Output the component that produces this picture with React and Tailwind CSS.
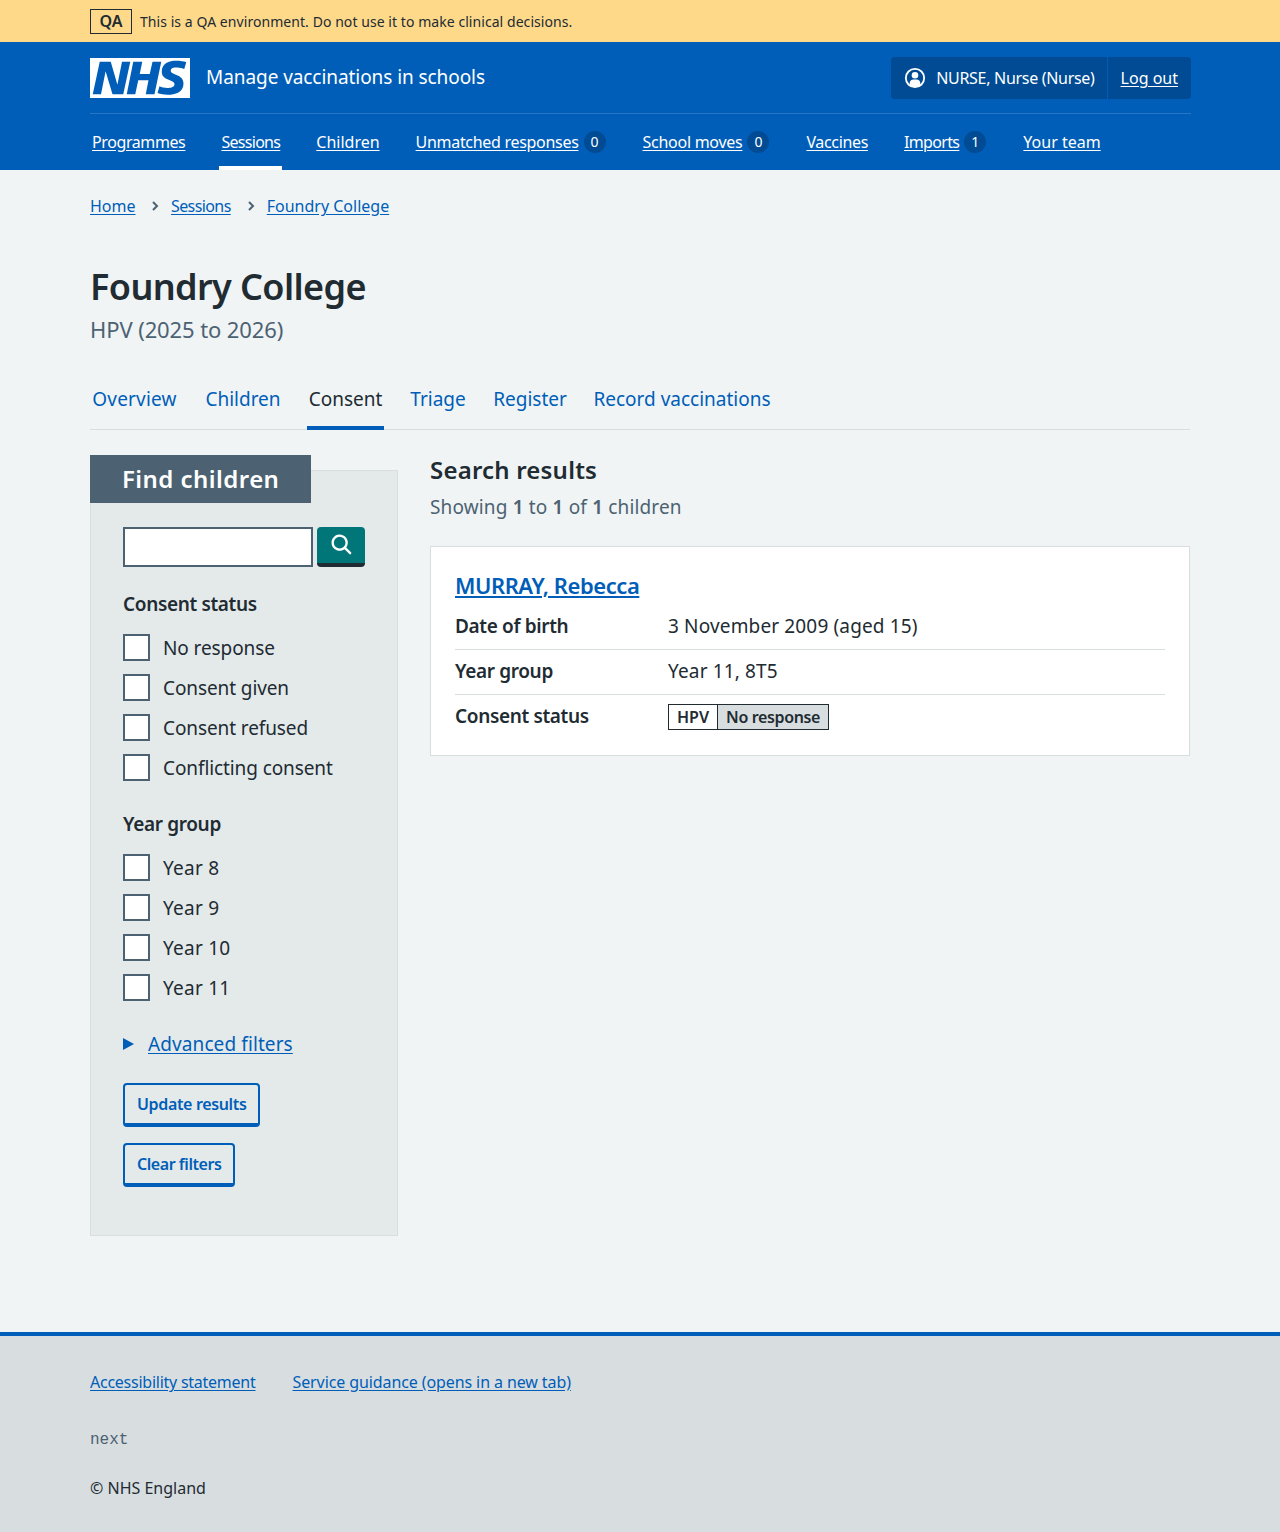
const navItems = [
  { label: 'Programmes', tracking: 'tracking-[-0.4px]' },
  { label: 'Sessions', tracking: 'tracking-[-0.7px]', active: true },
  { label: 'Children', tracking: 'tracking-normal' },
  { label: 'Unmatched responses', tracking: 'tracking-[-0.3px]', count: 0 },
  { label: 'School moves', tracking: 'tracking-[-0.27px]', count: 0 },
  { label: 'Vaccines', tracking: 'tracking-[-0.35px]' },
  { label: 'Imports', tracking: 'tracking-[-0.65px]', count: 1 },
  { label: 'Your team', tracking: 'tracking-normal' },
]

const tabs = [
  { label: 'Overview', width: 'w-[89px] tracking-[0.2px]' },
  { label: 'Children', width: 'w-[80px]' },
  { label: 'Consent', width: 'w-[77px]', active: true },
  { label: 'Triage', width: 'w-[60px]' },
  { label: 'Register', width: 'w-[76px]' },
  { label: 'Record vaccinations', width: 'w-[180px]' },
]

function NhsLogo() {
  return (
    <svg viewBox="0 0 40 16" className="w-[100px] h-10 shrink-0" role="img" aria-label="NHS">
      <path fill="#fff" d="M0 0h40v16H0z" />
      <path
        fill="#005eb8"
        d="M3.9 1.5h4.4l2.6 9h.1l1.8-9h3.3l-2.8 13H9l-2.7-9h-.1l-1.8 9H1.1M17.3 1.5h3.6l-1 4.9h4L25 1.5h3.5l-2.7 13h-3.5l1.1-5.6h-4.1l-1.2 5.6h-3.4M37.7 4.4c-.7-.3-1.6-.6-2.9-.6-1.4 0-2.5.2-2.5 1.3 0 1.8 5.1 1.2 5.1 5.1 0 3.6-3.3 4.5-6.4 4.5-1.3 0-2.9-.3-4-.7l.8-2.7c.7.4 2.1.7 3.2.7s2.8-.2 2.8-1.5c0-2.1-5.1-1.3-5.1-5 0-3.4 2.9-4.4 5.8-4.4 1.6 0 3.1.2 4 .6"
      />
    </svg>
  )
}

function UserIcon() {
  return (
    <svg viewBox="0 0 24 24" className="w-[22px] h-[22px] shrink-0" fill="none">
      <circle cx="12" cy="12" r="10" stroke="#fff" strokeWidth="2" />
      <circle cx="12" cy="9" r="3.6" fill="#fff" />
      <path fill="#fff" d="M6.2 20v-2.4c0-2.4 1.8-4 4-4h3.6c2.2 0 4 1.6 4 4V20c-1.6 1.2-3.6 2-5.8 2s-4.2-.8-5.8-2z" />
    </svg>
  )
}

function SearchIcon() {
  return (
    <svg viewBox="0 0 24 24" className="w-7 h-7 ml-[2px]" fill="#fff">
      <path d="M19.71 18.29l-4.11-4.1a7 7 0 1 0-1.41 1.41l4.1 4.11a1 1 0 0 0 1.42 0 1 1 0 0 0 0-1.42zM5 10a5 5 0 1 1 5 5 5 5 0 0 1-5-5z" />
    </svg>
  )
}

function Chevron() {
  return (
    <svg viewBox="0 0 8 12" className="w-2 h-3 ml-4 mr-3 shrink-0" fill="none" stroke="#4c6272" strokeWidth="2">
      <path d="M2 2l4 4-4 4" />
    </svg>
  )
}

function Checkbox({ label, tracking }) {
  return (
    <label className={`flex items-center h-[28px] gap-[13px] text-[19px] leading-7 text-[#212b32] ${tracking}`}>
      <span className="w-[27px] h-[27px] bg-white border-2 border-[#4c6272] shrink-0" />
      <span className="pt-[2px]">{label}</span>
    </label>
  )
}

function FilterGroup({ title, options, tracking }) {
  return (
    <div>
      <p className="text-[19px] leading-7 font-semibold tracking-[-0.35px] text-[#212b32] mb-[15px]">{title}</p>
      <div className="flex flex-col gap-3">
        {options.map(option => (
          <Checkbox key={option} label={option} tracking={tracking} />
        ))}
      </div>
    </div>
  )
}

function Row({ label, last, children }) {
  return (
    <div className={`flex h-[45px] items-center pb-[2px] ${last ? '' : 'border-b border-[#d8dde0]'}`}>
      <span className="w-[213px] text-[19px] font-semibold tracking-[-0.35px] text-[#212b32]">{label}</span>
      <span className="text-[19px] tracking-[0.15px] text-[#212b32]">{children}</span>
    </div>
  )
}

function App() {
  return (
    <div className="min-h-[1532px] bg-[#f0f4f5] text-[#212b32] font-['Noto_Sans',sans-serif] flex flex-col">
      <div className="h-[42px] bg-[#ffd98a] px-[90px] flex items-center gap-2">
        <span className="w-[42px] h-[25px] border border-[#212b32] flex items-center justify-center text-[16px] font-semibold">
          QA
        </span>
        <span className="text-[14px] tracking-[0.06px]">This is a QA environment. Do not use it to make clinical decisions.</span>
      </div>

      <header className="bg-[#005eb8] h-[128px] px-[90px] text-white">
        <div className="h-[72px] border-b border-[#2a76c2] flex items-center justify-between -mr-px">
          <div className="flex items-center gap-4">
            <NhsLogo />
            <span className="text-[19px] tracking-[-0.07px] -mt-px">Manage vaccinations in schools</span>
          </div>
          <div className="h-[42px] bg-[#004b93] rounded flex items-center text-[16px]">
            <div className="h-full flex items-center gap-[10px] pl-[13px] pr-3 border-r border-[#005eb8]">
              <UserIcon />
              <span className="tracking-[-0.3px]">NURSE, Nurse (Nurse)</span>
            </div>
            <a className="px-[13px] underline underline-offset-2">Log out</a>
          </div>
        </div>
        <nav className="flex h-[56px] text-[16px]">
          {navItems.map(item => (
            <div
              key={item.label}
              className={`flex items-center gap-[5px] px-[2px] pt-[3px] border-b-4 ${item.count !== undefined ? 'mr-[33px]' : 'mr-[32px]'} ${item.active ? 'border-white' : 'border-transparent'}`}
            >
              <a className={`underline underline-offset-2 ${item.tracking}`}>{item.label}</a>
              {item.count !== undefined && (
                <span className="w-[22px] h-[22px] rounded-full bg-[#004b93] flex items-center justify-center text-[14px]">
                  {item.count}
                </span>
              )}
            </div>
          ))}
        </nav>
      </header>

      <main className="flex-1 px-[90px]">
        <div className="flex items-center h-[72px] text-[16px] text-[#005eb8]">
          <a className="underline underline-offset-2 w-[45px]">Home</a>
          <Chevron />
          <a className="underline underline-offset-2 tracking-[-0.6px]">Sessions</a>
          <Chevron />
          <a className="underline underline-offset-2">Foundry College</a>
        </div>

        <h1 className="mt-[24px] text-[36px] leading-[42px] font-semibold tracking-[-0.6px]">Foundry College</h1>
        <p className="mt-[6px] text-[22px] leading-[30px] tracking-[-0.1px] text-[#4c6272]">HPV (2025 to 2026)</p>

        <div className="mt-[32px] h-[54px] flex gap-6 border-b border-[#d8dde0] text-[19px]">
          {tabs.map(tab => (
            <a
              key={tab.label}
              className={`${tab.width} h-[54px] flex items-center justify-center pb-[4px] border-b-4 ${tab.active ? 'border-[#005eb8] text-[#212b32]' : 'border-transparent text-[#005eb8]'}`}
            >
              {tab.label}
            </a>
          ))}
        </div>

        <div className="mt-[40px] flex gap-8 items-start">
          <aside className="w-[308px] h-[766px] shrink-0 bg-[#e4e9ea] border border-[#d8dde0] pl-8 pr-8">
            <h2 className="-mt-4 -ml-[33px] w-[221px] h-[48px] bg-[#4c6272] text-white text-[24px] font-semibold tracking-[0.45px] flex items-center pl-8">
              Find children
            </h2>
            <div className="mt-6 flex gap-1">
              <input className="w-[190px] h-10 bg-white border-2 border-[#4c6272]" />
              <button className="w-12 h-10 bg-[#007679] rounded border-b-4 border-[#212b32] flex items-center justify-center">
                <SearchIcon />
              </button>
            </div>
            <div className="mt-[23px] flex flex-col gap-[29px]">
              <FilterGroup
                title="Consent status"
                tracking="tracking-[-0.1px]"
                options={['No response', 'Consent given', 'Consent refused', 'Conflicting consent']}
              />
              <FilterGroup
                title="Year group"
                tracking="tracking-[0.25px]"
                options={['Year 8', 'Year 9', 'Year 10', 'Year 11']}
              />
            </div>
            <div className="mt-[29px] flex items-center gap-[14px] text-[19px] text-[#005eb8]">
              <svg viewBox="0 0 11 12" className="w-[11px] h-3" fill="#005eb8">
                <path d="M0 0l11 6-11 6z" />
              </svg>
              <a className="underline underline-offset-2 tracking-[0.1px]">Advanced filters</a>
            </div>
            <div className="mt-[24px] flex flex-col items-start gap-4">
              <button className="h-11 px-3 pt-[1px] border-2 border-b-4 border-[#005eb8] rounded text-[#005eb8] text-[16px] font-semibold tracking-[-0.35px]">
                Update results
              </button>
              <button className="h-11 px-3 pt-[1px] border-2 border-b-4 border-[#005eb8] rounded text-[#005eb8] text-[16px] font-semibold tracking-[-0.45px]">
                Clear filters
              </button>
            </div>
          </aside>

          <section className="flex-1 min-w-0 -mt-4">
            <h2 className="text-[24px] leading-8 font-semibold tracking-[0.2px]">Search results</h2>
            <p className="mt-[7px] text-[19px] leading-7 tracking-[0.15px] text-[#4c6272]">
              Showing <b className="font-semibold">1</b> to <b className="font-semibold">1</b> of{' '}
              <b className="font-semibold">1</b> children
            </p>
            <div className="mt-[25px] h-[210px] bg-white border border-[#d8dde0] px-6 pt-[23px]">
              <a className="block mb-[5px] text-[22px] leading-[30px] font-semibold tracking-[-0.45px] text-[#005eb8] underline decoration-2 underline-offset-2">
                MURRAY, Rebecca
              </a>
              <Row label="Date of birth">3 November 2009 (aged 15)</Row>
              <Row label="Year group">Year 11, 8T5</Row>
              <Row label="Consent status" last>
                <span className="flex h-[26px] w-fit border border-[#212b32] text-[16px] font-semibold leading-6 tracking-normal">
                  <span className="px-2 border-r border-[#212b32]">HPV</span>
                  <span className="px-2 bg-[#d8dde0] text-[#212b32] tracking-[-0.35px]">No response</span>
                </span>
              </Row>
            </div>
          </section>
        </div>
      </main>

      <footer className="h-[200px] bg-[#d8dde0] border-t-4 border-[#005eb8] px-[90px] pt-[32px] text-[16px]">
        <div className="flex gap-[37px] text-[#005eb8] leading-7">
          <a className="underline underline-offset-2 tracking-[-0.25px]">Accessibility statement</a>
          <a className="underline underline-offset-2 tracking-[-0.1px]">Service guidance (opens in a new tab)</a>
        </div>
        <p className="mt-[30px] font-['Liberation_Mono',monospace] leading-7 text-[#4c6272]">next</p>
        <p className="mt-[20px] leading-7">© NHS England</p>
      </footer>
    </div>
  )
}

export default App
